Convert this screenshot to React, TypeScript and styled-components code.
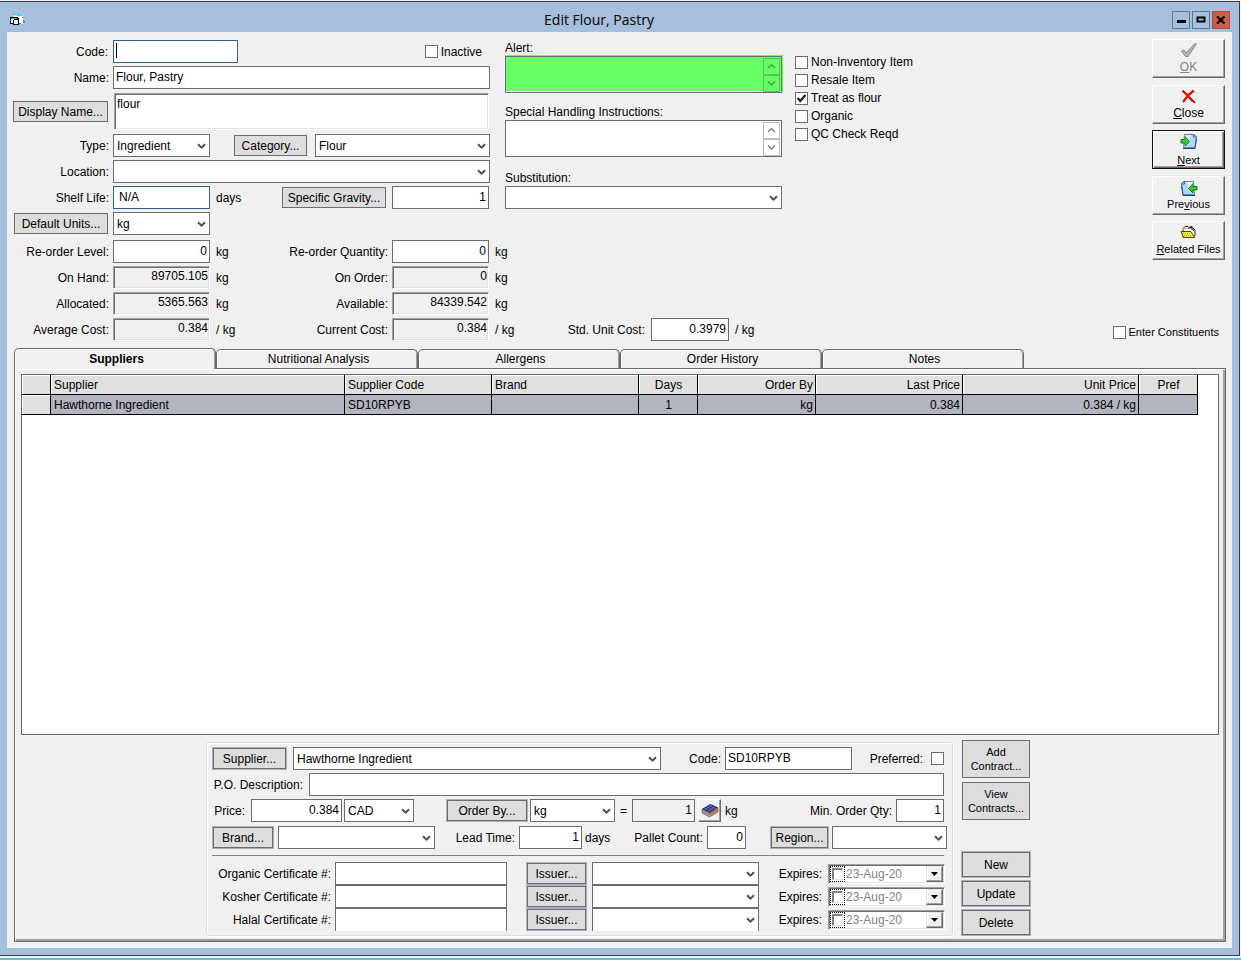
import React from "react";
import styled, { createGlobalStyle, css } from "styled-components";

const GlobalStyle = createGlobalStyle`
  * { box-sizing: border-box; }
  body {
    margin: 0;
    background: #f4f4f4;
    color: #000;
    font: 12px/14px "Liberation Sans", Arial, sans-serif;
  }
  button, input, select, textarea {
    margin: 0;
    color: inherit;
    font: inherit;
    border-radius: 0;
  }
`;

const FACE = "#f0f0f0";
const LINE = "#6d6d6d";

/* ---------- window ---------- */

const Desktop = styled.div`
  display: flex;
  flex-direction: column;
  min-height: 100vh;
  padding: 1px 1px 2px 0;
  border-bottom: 2px solid #5fc0de;
`;

const Window = styled.main`
  display: flex;
  flex: 1;
  flex-direction: column;
  padding: 0 7px 7px;
  background: #a6bfdc;
  border: solid #3c3c44;
  border-width: 1px 1px 1px 0;
`;

const TitleBar = styled.header`
  display: flex;
  align-items: center;
  height: 30px;
  padding: 6px 2px 0 3px;
`;

const Title = styled.h1`
  flex: 1;
  margin: 0;
  text-align: center;
  font: 14px/20px "Open Sans", "Segoe UI", sans-serif;
`;

const Caption = styled.div`
  display: flex;
  gap: 2px;
`;

const CaptionButton = styled.button<{ $close?: boolean }>`
  display: grid;
  place-items: center;
  width: 18px;
  height: 18px;
  padding: 0;
  background: ${(p) => (p.$close ? "#cc5f4c" : "#a6bfdc")};
  border: 1px solid ${(p) => (p.$close ? "#b44a3c" : "#5f7694")};
`;

const Client = styled.div`
  display: flex;
  flex: 1;
  flex-direction: column;
  padding: 7px 6px 6px 0;
  background: ${FACE};
`;

/* ---------- form parts ---------- */

const Row = styled.div<{ $cols: string; $h?: number }>`
  display: grid;
  grid-template-columns: ${(p) => p.$cols};
  align-items: center;
  height: ${(p) => p.$h ?? 23}px;
`;

const Label = styled.label<{ $pad?: number }>`
  padding-right: ${(p) => p.$pad ?? 4}px;
  text-align: right;
  white-space: nowrap;
`;

const Unit = styled.span<{ $pad?: number }>`
  padding-left: ${(p) => p.$pad ?? 6}px;
  white-space: nowrap;
`;

const sized = css<{ $w?: number }>`
  width: ${(p) => (p.$w ? `${p.$w}px` : "100%")};
  justify-self: end;
`;

const Text = styled.input<{ $w?: number; $right?: boolean; $blue?: boolean; $gray?: boolean; $open?: boolean; $inset?: number }>`
  ${sized}
  min-width: 0;
  height: 23px;
  padding: 0 2px 2px ${(p) => p.$inset ?? 2}px;
  text-align: ${(p) => (p.$right ? "right" : "left")};
  background: ${(p) => (p.$gray ? FACE : "#fff")};
  border: 1px solid ${(p) => (p.$blue ? "#2d628f" : LINE)};
  ${(p) => p.$open && "border-bottom: 0;"}
  outline: none;
`;

const Sunken = styled.input`
  width: 100%;
  height: 23px;
  min-width: 0;
  padding: 0 1px 4px 0;
  text-align: right;
  background: ${FACE};
  border: 1px solid;
  border-color: #a0a0a0 #fff #fff #a0a0a0;
  box-shadow: inset 1px 1px 0 ${LINE}, inset -1px -1px 0 #e3e3e3;
  outline: none;
`;

const SunkenArea = styled.textarea`
  display: block;
  width: 375px;
  height: 37px;
  margin-left: 1px;
  padding: 3px 2px;
  background: #fff;
  border: 1px solid;
  border-color: #a0a0a0 #fff #fff #a0a0a0;
  box-shadow: inset 1px 1px 0 ${LINE}, inset -1px -1px 0 #e3e3e3;
  outline: none;
  resize: none;
`;

const ComboBox = styled.span<{ $w?: number }>`
  ${sized}
  position: relative;
  display: block;
  height: 23px;
`;

const ComboSelect = styled.select<{ $open?: boolean }>`
  display: block;
  width: 100%;
  height: 23px;
  padding: 0 20px 0 3px;
  background: #fff;
  border: 1px solid ${LINE};
  ${(p) => p.$open && "border-bottom: 0;"}
  appearance: none;
  outline: none;
`;

const ComboArrow = styled.svg`
  position: absolute;
  top: 9px;
  right: 4px;
  pointer-events: none;
`;

function Combo({ id, name, value, w, open }: { id?: string; name?: string; value?: string; w?: number; open?: boolean }) {
  return (
    <ComboBox $w={w}>
      <ComboSelect id={id} aria-label={name} defaultValue={value ?? ""} $open={open}>
        <option value={value ?? ""}>{value ?? ""}</option>
      </ComboSelect>
      <ComboArrow width="9" height="7" viewBox="0 0 9 7" aria-hidden="true">
        <path d="M1 1.200 4.500 4.700 8 1.200" fill="none" stroke="#505050" strokeWidth="2" />
      </ComboArrow>
    </ComboBox>
  );
}

const Push = styled.button<{ $w?: number; $h?: number; $ring?: boolean }>`
  ${sized}
  height: ${(p) => p.$h ?? 21}px;
  padding: 0;
  white-space: nowrap;
  background: #dddddd;
  border: 1px solid ${(p) => (p.$ring ? "#adaeba" : LINE)};
  ${(p) => p.$ring && `box-shadow: inset 0 0 0 1px ${LINE};`}
`;

const LabelPush = styled(Push)`
  margin-right: 5px;
`;

const Check = styled.label`
  display: flex;
  align-items: center;
  justify-self: end;
  gap: 3px;
  height: 18px;
  white-space: nowrap;
`;

const Tick = styled.input.attrs({ type: "checkbox" })`
  display: block;
  flex: none;
  width: 13px;
  height: 13px;
  background: #fff;
  border: 1px solid ${LINE};
  appearance: none;
  justify-self: end;
`;

const TickSpot = styled.span`
  position: relative;
  display: block;
`;

const TickMark = styled.svg`
  position: absolute;
  top: 0;
  left: 0;
  pointer-events: none;
`;

function CheckItem({ label, on }: { label: string; on?: boolean }) {
  return (
    <Check>
      <TickSpot>
        <Tick defaultChecked={on} />
        {on && (
          <TickMark width="13" height="13" viewBox="0 0 13 13" aria-hidden="true">
            <path d="M2.500 6 5.200 9 10.500 3" fill="none" stroke="#212121" strokeWidth="2.200" />
          </TickMark>
        )}
      </TickSpot>
      {label}
    </Check>
  );
}

/* ---------- upper half ---------- */

const Upper = styled.section`
  display: flex;
  justify-content: space-between;
  height: 309px;
`;

const Details = styled.div`
  display: flex;
  flex-direction: column;
  gap: 5px;
  padding-top: 1px;
`;

const Blocks = styled.div`
  display: flex;
`;

const Stack = styled.div`
  display: flex;
  flex-direction: column;
  gap: 3px;
`;

const Identity = styled(Stack)`
  width: 483px;
`;

const CodeBox = styled.span`
  position: relative;
`;

const Caret = styled.i`
  position: absolute;
  top: 3px;
  left: 3px;
  width: 1px;
  height: 15px;
  background: #000;
`;

const InactiveBox = styled.div`
  display: flex;
  justify-content: flex-end;
  padding-right: 8px;
`;

const Notes = styled.div`
  display: flex;
  flex-direction: column;
  width: 277px;
  margin-left: 15px;
  padding-top: 1px;
`;

const NoteLabel = styled.label`
  height: 15px;
  line-height: 14px;
`;

const NoteBox = styled.div<{ $after: number }>`
  position: relative;
  height: 37px;
  margin-bottom: ${(p) => p.$after}px;
`;

const NoteArea = styled.textarea<{ $alert?: boolean }>`
  display: block;
  width: 100%;
  height: 37px;
  background: ${(p) => (p.$alert ? "#66ff66" : "#fff")};
  border: 1px solid ${LINE};
  ${(p) => p.$alert && "box-shadow: inset 0 -1px 0 #fff, 0 -1px 0 #66ff66, 1px -1px 0 #66ff66;"}
  outline: none;
  resize: none;
`;

const Scroll = styled.div<{ $tint?: boolean }>`
  position: absolute;
  top: 2px;
  right: 2px;
  display: flex;
  flex-direction: column;
  color: ${(p) => (p.$tint ? "#4d9b4d" : "#808080")};
  button {
    display: grid;
    place-items: center;
    width: 17px;
    height: 17px;
    padding: 0;
    background: transparent;
    border: 1px solid ${(p) => (p.$tint ? "#58c058" : "#bcbcbc")};
  }
`;

const Flags = styled.div`
  display: flex;
  flex-direction: column;
  align-items: flex-start;
  margin-left: 13px;
  padding-top: 13px;
`;

const Side = styled.div`
  display: flex;
  flex-direction: column;
  align-items: flex-end;
  justify-content: space-between;
  padding: 0 1px 7px 0;
`;

const Commands = styled.div`
  display: flex;
  flex-direction: column;
  justify-content: space-between;
  height: 221px;
`;

const Command = styled.button<{ $current?: boolean; $small?: boolean }>`
  display: flex;
  flex-direction: column;
  align-items: center;
  justify-content: space-between;
  width: 73px;
  height: 39px;
  padding: ${(p) => (p.$current ? "2px 0 1px" : "3px 0 3px")};
  font-size: ${(p) => (p.$small ? 11 : 12)}px;
  background: ${FACE};
  border: 1px solid;
  border-color: ${(p) => (p.$current ? "#1a0a0c" : "#fff #696969 #696969 #fff")};
  box-shadow: ${(p) =>
    p.$current ? "inset 1px 1px 0 #fff, inset -1px -1px 0 #696969, inset -2px -2px 0 #a0a0a0" : "inset -1px -1px 0 #a0a0a0"};
  white-space: nowrap;
  &:disabled { color: #838383; }
`;

const Constituents = styled.div`
  padding-right: 6px;
  font-size: 11px;
`;

/* ---------- tabs and grid ---------- */

const Tabs = styled.div`
  display: flex;
  align-items: flex-end;
  height: 20px;
  padding-left: 7px;
`;

const Tab = styled.button<{ $on?: boolean }>`
  position: relative;
  width: 202px;
  height: ${(p) => (p.$on ? 21 : 19)}px;
  margin-bottom: ${(p) => (p.$on ? -1 : 0)}px;
  padding: 0 0 0 3px;
  z-index: ${(p) => (p.$on ? 1 : 0)};
  font-weight: ${(p) => (p.$on ? "bold" : "normal")};
  background: ${FACE};
  border: 1px solid #696969;
  border-bottom: 0;
  border-radius: 5px 5px 0 0;
  box-shadow: inset 1px 1px 0 #fff, inset -1px 0 0 #a0a0a0;
`;

const Panel = styled.section`
  display: flex;
  flex: 1;
  flex-direction: column;
  margin-left: 7px;
  padding: 5px 6px 5px 6px;
  border: 1px solid #696969;
  box-shadow: inset 1px 1px 0 #fff, inset -1px -1px 0 #a0a0a0, inset -2px -2px 0 #a0a0a0;
`;

const GridBox = styled.div`
  flex: 1;
  min-height: 300px;
  margin-bottom: 5px;
  background: #fff;
  border: 1px solid #696969;
`;

const Grid = styled.table`
  width: 1176px;
  table-layout: fixed;
  border-collapse: separate;
  border-spacing: 0;
`;

const Cell = styled.td<{ $align?: string; $head?: boolean }>`
  height: 20px;
  padding: 0 2px 0 3px;
  overflow: hidden;
  font-weight: normal;
  text-align: ${(p) => p.$align ?? "left"};
  white-space: nowrap;
  background: ${(p) => (p.$head ? "#e0e0e0" : "#b2b4bf")};
  border: solid #000;
  border-width: 0 1px 1px 0;
  ${(p) => p.$head && "box-shadow: inset 1px 1px 0 #fff;"}
`;

const columns = [
  { title: "", value: "", w: 29 },
  { title: "Supplier", value: "Hawthorne Ingredient", w: 294 },
  { title: "Supplier Code", value: "SD10RPYB", w: 147 },
  { title: "Brand", value: "", w: 147 },
  { title: "Days", value: "1", w: 59, align: "center" },
  { title: "Order By", value: "kg", w: 118, align: "right" },
  { title: "Last Price", value: "0.384", w: 147, align: "right" },
  { title: "Unit Price", value: "0.384 / kg", w: 176, align: "right" },
  { title: "Pref", value: "", w: 59, align: "center" },
];

/* ---------- supplier editor ---------- */

const Editor = styled.div`
  display: flex;
  align-items: flex-start;
  justify-content: center;
  gap: 8px;
  padding-right: 3px;
`;

const Frame = styled.div`
  width: 747px;
  margin-top: 2px;
  padding: 4px 5px;
  border: 1px solid #d5dfe5;
  border-radius: 3px;
  box-shadow: inset 1px 1px 0 #fff, 1px 1px 0 #fff;
`;

const Rule = styled.hr`
  width: 732px;
  margin: 5px 0 6px;
  border: 0;
  border-top: 1px solid #808080;
`;

const Actions = styled.div`
  display: flex;
  flex-direction: column;
  justify-content: space-between;
  width: 70px;
  height: 196px;
`;

const ActionGroup = styled.div<{ $gap: number }>`
  display: flex;
  flex-direction: column;
  align-items: center;
  gap: ${(p) => p.$gap}px;
`;

const ContractButton = styled(Push)`
  width: 68px;
  height: 38px;
  font-size: 11px;
`;

const PalletButton = styled.button`
  display: grid;
  place-items: center;
  justify-self: end;
  width: 23px;
  height: 23px;
  padding: 0;
  background: ${FACE};
  border: 1px solid;
  border-color: #fff #696969 #696969 #fff;
  box-shadow: inset -1px -1px 0 #a0a0a0;
`;

const DateBox = styled.span`
  display: flex;
  align-items: center;
  width: 117px;
  height: 20px;
  padding: 1px;
  background: #fff;
  border: 1px solid;
  border-color: #a0a0a0 #fff #fff #a0a0a0;
  box-shadow: inset 1px 1px 0 ${LINE}, inset -1px -1px 0 #e3e3e3;
`;

const DateTick = styled.input.attrs({ type: "checkbox" })`
  width: 11px;
  height: 12px;
  margin: 0;
  background: #fff;
  border: 1px solid;
  border-color: #808080 #e3e3e3 #e3e3e3 #808080;
  box-shadow: inset 1px 1px 0 #808080;
  appearance: none;
`;

const DateFocus = styled.span`
  display: grid;
  place-items: center;
  width: 15px;
  height: 16px;
  border: 1px dotted #000;
`;

const DateText = styled.input`
  flex: 1;
  min-width: 0;
  height: 16px;
  padding: 1px 1px 0;
  color: #838383;
  background: transparent;
  border: 0;
  outline: none;
`;

const DateButton = styled.button`
  display: grid;
  place-items: center;
  width: 17px;
  height: 16px;
  padding: 0;
  background: ${FACE};
  border: 1px solid;
  border-color: #e3e3e3 #696969 #696969 #e3e3e3;
  box-shadow: inset -1px -1px 0 #a0a0a0, inset 1px 1px 0 #fff;
`;

/* ---------- icons ---------- */

const FormIcon = () => (
  <svg width="16" height="14" viewBox="0 0 16 14" shapeRendering="crispEdges" aria-hidden="true">
    <path d="M4 2h5v1h4v8H8V5H4z" fill="#fff" />
    <path d="M3 1h5v1H3zM7 2h5v1H7z" fill="#00e5f0" />
    <path d="M13 7h1v1h1v2h-2zM8 10h3v1H8zM12 4h1v1h-1z" fill="#808080" />
    <path d="M0 4h8v1h1v7H3v-1H0z" fill="#000" />
    <path d="M1 6h3v4H1zM4 7h4v4H4z" fill="#fff" />
    <path d="M1 5h6v1H1z" fill="#00c8d0" />
    <path d="M3 7h1v4H3zM4 6h4v1H4z" fill="#000" />
  </svg>
);

const OkIcon = () => (
  <svg width="18" height="15" viewBox="0 0 18 15" aria-hidden="true">
    <path d="M1.500 8 4 7 6 10 14.500.8h2L8 13.500H5.500z" fill="#b4b4b4" stroke="#8c8c8c" />
  </svg>
);

const CloseIcon = () => (
  <svg width="15" height="15" viewBox="0 0 15 15" aria-hidden="true">
    <path d="M10 9.500 14 14M13 2 9 5.500" stroke="#5a0000" strokeWidth="1.200" />
    <path d="M1.500 1.500 6 6 12 12.500M12.500 1.500 7 6.500 2 13" fill="none" stroke="#f00000" strokeWidth="2.200" />
  </svg>
);

const PageIcon = ({ back }: { back?: boolean }) => (
  <svg width="18" height="17" viewBox="0 0 18 17" aria-hidden="true">
    <g transform={back ? "matrix(-1 0 0 1 18 0)" : undefined}>
      <path d="M4.500 1.500H14l2.500 2-1.500 11H3.500z" fill="#b4d6f8" stroke="#5a88c0" />
      <path d="M5 2h6L9 9l-5 3z" fill="#eef8ff" />
      <path d="m13.500 1.500 3 2.500-3 0z" fill="#fff" stroke="#28508c" strokeWidth=".8" />
      <path d="M3 15.500h12l1.500-10" fill="none" stroke="#2c4470" />
      <path d="M1 6.500h4V3.500L9.500 8.500 5 13v-3H1z" fill="#44c43c" stroke="#17781b" />
    </g>
  </svg>
);

const FolderIcon = () => (
  <svg width="17" height="14" viewBox="0 0 17 14" aria-hidden="true">
    <path d="M3 3.500 5 1.500h3l1 1 3-1 3 4v5l-3 2H3z" fill="#fff" stroke="#222" />
    <path d="M8 3.500 11 2l3 4" fill="#8fa8c8" stroke="#223" />
    <path d="M1 6.500h10l3.500 6H3.500z" fill="#ffe840" stroke="#504800" />
    <path d="M3 8.500h8M4 10.500h8" stroke="#b89c00" strokeDasharray="1 1" />
    <path d="M2.500 5V3.500h5" fill="none" stroke="#e0c020" />
  </svg>
);

const PalletIcon = () => (
  <svg width="18" height="15" viewBox="0 0 18 15" aria-hidden="true">
    <path d="M1 6.500v3.500l7.500 4 8.500-5v-4z" fill="#a09484" stroke="#5c5044" strokeWidth=".6" />
    <path d="M.8 6 9.500 1 17 4.500 8.500 10z" fill="#20207c" />
    <path d="M8.500 11.800V10L17 4.500v1.800z" fill="#d0502c" />
    <path d="M3 4.800 10.500 8.700M5.200 3.500l7.500 4M7.500 2.200l7.500 4M3 7.300l8.500-5.400M6 8.800l8.500-5.400" stroke="#8486b4" strokeWidth=".7" />
  </svg>
);

const Chevron = ({ up }: { up?: boolean }) => (
  <svg width="9" height="7" viewBox="0 0 9 7" aria-hidden="true">
    <path d={up ? "M1 5 4.500 1.500 8 5" : "M1 1.500 4.500 5 8 1.500"} fill="none" stroke="currentColor" strokeWidth="1.500" />
  </svg>
);

function NoteField({ id, label, alert, after }: { id: string; label: string; alert?: boolean; after: number }) {
  return (
    <>
      <NoteLabel htmlFor={id}>{label}</NoteLabel>
      <NoteBox $after={after}>
        <NoteArea id={id} $alert={alert} />
        <Scroll $tint={alert}>
          <button aria-label="Scroll up"><Chevron up /></button>
          <button aria-label="Scroll down"><Chevron /></button>
        </Scroll>
      </NoteBox>
    </>
  );
}

const METRIC = "106px 97px 32px 150px 97px 60px 102px 78px 30px";

const metrics = [
  { a: "On Hand:", av: "89705.105", b: "On Order:", bv: "0", unit: "kg" },
  { a: "Allocated:", av: "5365.563", b: "Available:", bv: "84339.542", unit: "kg" },
  { a: "Average Cost:", av: "0.384", b: "Current Cost:", bv: "0.384", unit: "/ kg" },
];

const certificates = ["Organic", "Kosher", "Halal"];

export default function App() {
  return (
    <Desktop>
      <GlobalStyle />
      <Window>
        <TitleBar>
          <FormIcon />
          <Title>Edit Flour, Pastry</Title>
          <Caption>
            <CaptionButton aria-label="Minimize">
              <svg width="10" height="8" viewBox="0 0 10 8"><path d="M1 4h9v3H1z" /></svg>
            </CaptionButton>
            <CaptionButton aria-label="Maximize">
              <svg width="10" height="8" viewBox="0 0 10 8"><path d="M1.500 1.500h7v4h-7z" fill="none" stroke="#000" strokeWidth="2" /></svg>
            </CaptionButton>
            <CaptionButton $close aria-label="Close window">
              <svg width="10" height="8" viewBox="0 0 10 8"><path d="m1 .5 7.500 7M8.500.5 1 7.500" stroke="#000" strokeWidth="2.200" /></svg>
            </CaptionButton>
          </Caption>
        </TitleBar>

        <Client>
          <Upper>
            <Details>
              <Blocks>
                <Identity>
                  <Row $cols="106px 125px 1fr">
                    <Label htmlFor="code" $pad={5}>Code:</Label>
                    <CodeBox>
                      <Text id="code" $blue />
                      <Caret />
                    </CodeBox>
                    <InactiveBox><CheckItem label="Inactive" /></InactiveBox>
                  </Row>
                  <Row $cols="106px 377px">
                    <Label htmlFor="name">Name:</Label>
                    <Text id="name" defaultValue="Flour, Pastry" />
                  </Row>
                  <Row $cols="106px 377px" $h={39}>
                    <LabelPush $w={95}>Display Name...</LabelPush>
                    <SunkenArea aria-label="Display name" defaultValue="flour" />
                  </Row>
                  <Row $cols="106px 97px 97px 183px">
                    <Label htmlFor="type">Type:</Label>
                    <Combo id="type" value="Ingredient" />
                    <Push $w={73}>Category...</Push>
                    <Combo name="Category" value="Flour" w={175} />
                  </Row>
                  <Row $cols="106px 377px">
                    <Label htmlFor="location">Location:</Label>
                    <Combo id="location" />
                  </Row>
                  <Row $cols="106px 97px 32px 144px 103px">
                    <Label htmlFor="shelf">Shelf Life:</Label>
                    <Text id="shelf" $blue $inset={5} defaultValue="N/A" />
                    <Unit>days</Unit>
                    <Push $w={104}>Specific Gravity...</Push>
                    <Text aria-label="Specific gravity" $w={97} $right defaultValue="1" />
                  </Row>
                  <Row $cols="106px 97px">
                    <LabelPush $w={94}>Default Units...</LabelPush>
                    <Combo name="Default units" value="kg" />
                  </Row>
                </Identity>

                <Notes>
                  <NoteField id="alert" label="Alert:" alert after={12} />
                  <NoteField id="special" label="Special Handling Instructions:" after={14} />
                  <NoteLabel htmlFor="substitution">Substitution:</NoteLabel>
                  <Combo id="substitution" />
                </Notes>

                <Flags>
                  <CheckItem label="Non-Inventory Item" />
                  <CheckItem label="Resale Item" />
                  <CheckItem label="Treat as flour" on />
                  <CheckItem label="Organic" />
                  <CheckItem label="QC Check Reqd" />
                </Flags>
              </Blocks>

              <Stack>
                <Row $cols={METRIC}>
                  <Label htmlFor="level">Re-order Level:</Label>
                  <Text id="level" $right defaultValue="0" />
                  <Unit>kg</Unit>
                  <Label htmlFor="quantity">Re-order Quantity:</Label>
                  <Text id="quantity" $right defaultValue="0" />
                  <Unit>kg</Unit>
                </Row>
                {metrics.map((m, i) => (
                  <Row key={m.a} $cols={METRIC}>
                    <Label htmlFor={`a${i}`}>{m.a}</Label>
                    <Sunken id={`a${i}`} readOnly value={m.av} />
                    <Unit>{m.unit}</Unit>
                    <Label htmlFor={`b${i}`}>{m.b}</Label>
                    <Sunken id={`b${i}`} readOnly value={m.bv} />
                    <Unit>{m.unit}</Unit>
                    {i === 2 && (
                      <>
                        <Label htmlFor="std" $pad={6}>Std. Unit Cost:</Label>
                        <Text id="std" $right defaultValue="0.3979" />
                        <Unit>/ kg</Unit>
                      </>
                    )}
                  </Row>
                ))}
              </Stack>
            </Details>

            <Side>
              <Commands>
                <Command disabled><OkIcon /><span><u>O</u>K</span></Command>
                <Command><CloseIcon /><span><u>C</u>lose</span></Command>
                <Command $current $small><PageIcon /><span><u>N</u>ext</span></Command>
                <Command $small><PageIcon back /><span>Pre<u>v</u>ious</span></Command>
                <Command $small><FolderIcon /><span><u>R</u>elated Files</span></Command>
              </Commands>
              <Constituents><CheckItem label="Enter Constituents" /></Constituents>
            </Side>
          </Upper>

          <Tabs role="tablist">
            {["Suppliers", "Nutritional Analysis", "Allergens", "Order History", "Notes"].map((t, i) => (
              <Tab key={t} role="tab" aria-selected={i === 0} $on={i === 0}>{t}</Tab>
            ))}
          </Tabs>

          <Panel>
            <GridBox>
              <Grid>
                <colgroup>
                  {columns.map((c, i) => <col key={i} width={c.w} />)}
                </colgroup>
                <thead>
                  <tr>
                    {columns.map((c, i) => <Cell as="th" key={i} $head $align={c.align}>{c.title}</Cell>)}
                  </tr>
                </thead>
                <tbody>
                  <tr>
                    {columns.map((c, i) => <Cell key={i} $head={i === 0} $align={c.align}>{c.value}</Cell>)}
                  </tr>
                </tbody>
              </Grid>
            </GridBox>

            <Editor>
              <Frame>
                <Stack>
                  <Row $cols="75px 374px 64px 127px 75px 17px">
                    <Push $ring $h={23}>Supplier...</Push>
                    <Combo name="Supplier" value="Hawthorne Ingredient" w={368} />
                    <Label htmlFor="scode">Code:</Label>
                    <Text id="scode" defaultValue="SD10RPYB" />
                    <Label htmlFor="preferred">Preferred:</Label>
                    <Tick id="preferred" />
                  </Row>
                  <Row $cols="97px 635px">
                    <Label htmlFor="po" $pad={6}>P.O. Description:</Label>
                    <Text id="po" />
                  </Row>
                  <Row $cols="39px 91px 72px 114px 87px 17px 63px 26px 27px 148px 48px">
                    <Label htmlFor="price" $pad={6}>Price:</Label>
                    <Text id="price" $right defaultValue="0.384" />
                    <Combo name="Currency" value="CAD" w={70} />
                    <Push $ring $w={82} $h={23}>Order By...</Push>
                    <Combo name="Order unit" value="kg" w={85} />
                    <Unit $pad={5}>=</Unit>
                    <Text aria-label="Unit amount" $gray $right readOnly value="1" />
                    <PalletButton aria-label="Pallet"><PalletIcon /></PalletButton>
                    <Unit $pad={4}>kg</Unit>
                    <Label htmlFor="minqty">Min. Order Qty:</Label>
                    <Text id="minqty" $right defaultValue="1" />
                  </Row>
                  <Row $h={25} $cols="62px 161px 84px 63px 27px 98px 39px 83px 118px">
                    <Push $ring $h={23}>Brand...</Push>
                    <Combo name="Brand" w={157} />
                    <Label htmlFor="lead">Lead Time:</Label>
                    <Text id="lead" $right defaultValue="1" />
                    <Unit $pad={3}>days</Unit>
                    <Label htmlFor="pallets">Pallet Count:</Label>
                    <Text id="pallets" $right defaultValue="0" />
                    <Push $ring $w={59} $h={23}>Region...</Push>
                    <Combo name="Region" w={115} />
                  </Row>
                </Stack>
                <Rule />
                {certificates.map((c, i) => (
                  <Row key={c} $cols="123px 172px 80px 172px 69px 117px">
                    <Label htmlFor={c}>{c} Certificate #:</Label>
                    <Text id={c} $open={i === 2} />
                    <Push $ring $w={61} $h={23}>Issuer...</Push>
                    <Combo name={`${c} issuer`} w={167} open={i === 2} />
                    <Label htmlFor={`${c}-date`} $pad={6}>Expires:</Label>
                    <DateBox>
                      <DateFocus><DateTick aria-label={`${c} expiry set`} /></DateFocus>
                      <DateText id={`${c}-date`} defaultValue="23-Aug-20" />
                      <DateButton aria-label="Open calendar">
                        <svg width="7" height="4" viewBox="0 0 7 4"><path d="M0 0h7L3.500 4z" /></svg>
                      </DateButton>
                    </DateBox>
                  </Row>
                ))}
              </Frame>

              <Actions>
                <ActionGroup $gap={4}>
                  <ContractButton>Add<br />Contract...</ContractButton>
                  <ContractButton>View<br />Contracts...</ContractButton>
                </ActionGroup>
                <ActionGroup $gap={2}>
                  <Push $ring $h={27}>New</Push>
                  <Push $ring $h={27}>Update</Push>
                  <Push $ring $h={27}>Delete</Push>
                </ActionGroup>
              </Actions>
            </Editor>
          </Panel>
        </Client>
      </Window>
    </Desktop>
  );
}
